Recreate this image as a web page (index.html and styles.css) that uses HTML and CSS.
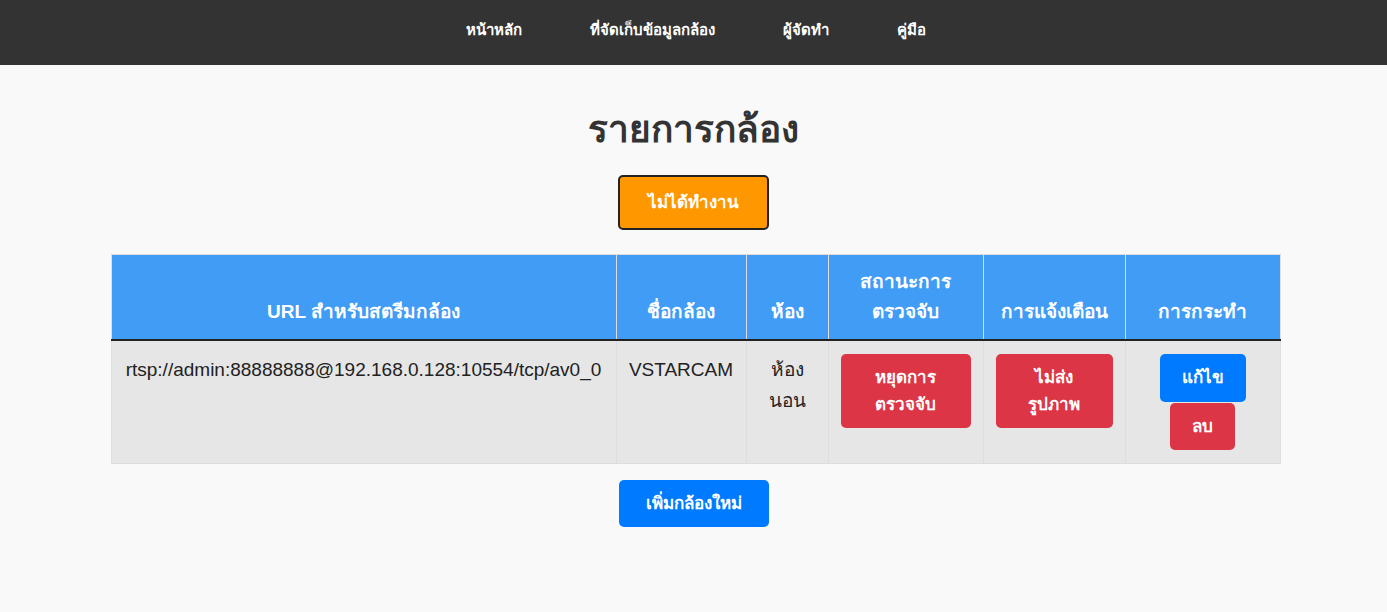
FILE: index.html
```html
<!DOCTYPE html>
<html lang="th">
<head>
<meta charset="utf-8">
<title>รายการกล้อง</title>
<link rel="stylesheet" href="styles.css">
</head>
<body>
<nav class="topnav">
  <a href="#" class="nav-link">หน้าหลัก</a>
  <a href="#" class="nav-link">ที่จัดเก็บข้อมูลกล้อง</a>
  <a href="#" class="nav-link">ผู้จัดทำ</a>
  <a href="#" class="nav-link">คู่มือ</a>
</nav>
<main class="content">
  <h1 class="page-title">รายการกล้อง</h1>
  <div class="status-wrap">
    <button class="btn btn-orange">ไม่ได้ทำงาน</button>
  </div>
  <table class="cam-table">
    <colgroup>
      <col class="c-url">
      <col class="c-name">
      <col class="c-room">
      <col class="c-status">
      <col class="c-alert">
      <col class="c-action">
    </colgroup>
    <thead>
      <tr>
        <th>URL สำหรับสตรีมกล้อง</th>
        <th>ชื่อกล้อง</th>
        <th>ห้อง</th>
        <th><span class="ln">สถานะการ</span><span class="ln">ตรวจจับ</span></th>
        <th>การแจ้งเตือน</th>
        <th>การกระทำ</th>
      </tr>
    </thead>
    <tbody>
      <tr>
        <td>rtsp://admin:88888888@192.168.0.128:10554/tcp/av0_0</td>
        <td>VSTARCAM</td>
        <td><span class="ln">ห้อง</span><span class="ln">นอน</span></td>
        <td><button class="btn btn-red btn-full"><span class="ln">หยุดการ</span><span class="ln">ตรวจจับ</span></button></td>
        <td><button class="btn btn-red btn-full"><span class="ln">ไม่ส่ง</span><span class="ln">รูปภาพ</span></button></td>
        <td>
          <div class="actions">
            <button class="btn btn-blue btn-edit">แก้ไข</button>
            <button class="btn btn-red">ลบ</button>
          </div>
        </td>
      </tr>
    </tbody>
  </table>
  <div class="add-wrap">
    <button class="btn btn-blue btn-add">เพิ่มกล้องใหม่</button>
  </div>
</main>
</body>
</html>
```

FILE: styles.css
```css
* { box-sizing: border-box; }

body {
  margin: 0;
  background: #f9f9f9;
  color: #333;
  font-family: "Liberation Sans", Arial, sans-serif;
}

.topnav {
  height: 65px;
  background: #333;
  display: flex;
  justify-content: center;
  align-items: center;
  gap: 68px;
  padding-left: 4px;
  padding-bottom: 6px;
}

.nav-link {
  color: #fff;
  text-decoration: none;
  font-weight: bold;
  font-size: 15px;
}

.content {
  display: flex;
  flex-direction: column;
  align-items: center;
}

.page-title {
  margin: 40px 0 20px;
  font-size: 37px;
  font-weight: bold;
  color: #333;
  line-height: 50px;
}

.status-wrap {
  margin-bottom: 24px;
}

.ln { display: block; }

.btn {
  font-family: "Liberation Sans", Arial, sans-serif;
  font-size: 17px;
  font-weight: bold;
  color: #fff;
  border: none;
  border-radius: 5px;
  padding: 10px 22px;
  line-height: 27px;
  cursor: pointer;
}

.btn-orange {
  background: #ff9800;
  border: 2px solid #222;
  padding: 12px 28px;
}

.btn-red { background: #dc3545; }
.btn-blue { background: #007bff; }

.btn-edit { line-height: 28px; }

.btn-add { padding: 10px 27px; }

.btn-full {
  width: 100%;
  padding: 10px 12px;
}

.cam-table {
  width: 1169px;
  margin-left: 4px;
  border-collapse: collapse;
  table-layout: fixed;
  background: #e6e6e6;
  border: 1px solid #ddd;
}

.c-url { width: 505px; }
.c-name { width: 130px; }
.c-room { width: 82px; }
.c-status { width: 155px; }
.c-alert { width: 142px; }
.c-action { width: 155px; }

.cam-table th {
  background: #409cf5;
  color: #fff;
  font-size: 19px;
  font-weight: bold;
  padding: 12px;
  vertical-align: bottom;
  border: 1px solid #ddd;
  border-bottom: 2px solid #222;
  line-height: 30px;
}

.cam-table td {
  font-size: 19px;
  padding: 13px 12px 13px;
  text-align: center;
  vertical-align: top;
  border: 1px solid #ddd;
  line-height: 31px;
  color: #222;
}

.actions {
  display: flex;
  flex-direction: column;
  align-items: center;
  gap: 1px;
}

.add-wrap {
  margin-top: 16px;
}
```
